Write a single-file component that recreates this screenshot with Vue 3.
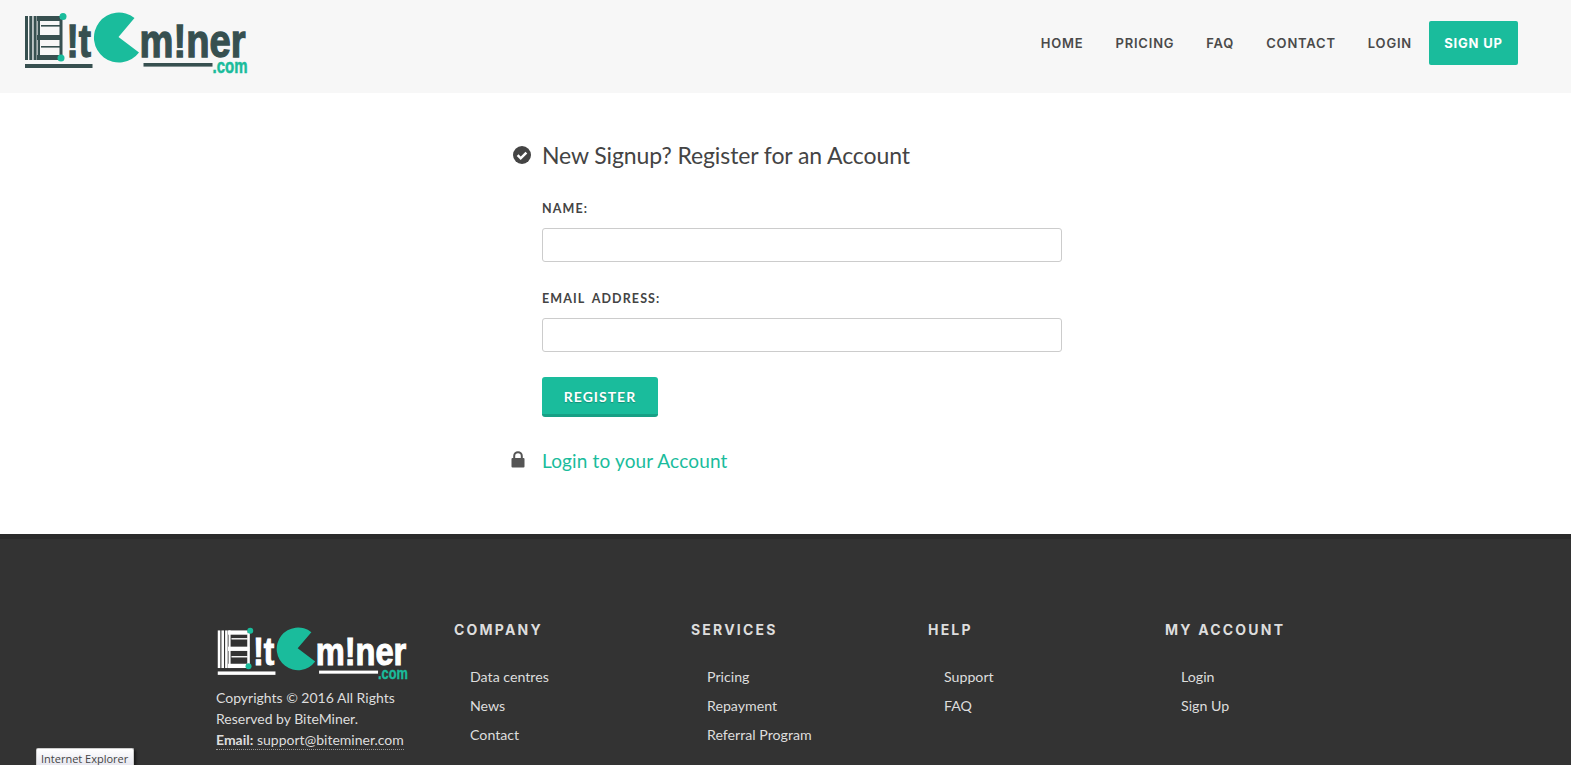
<template>
  <div class="page">
    <svg class="logo-defs" width="0" height="0" aria-hidden="true">
      <symbol id="bm-logo" viewBox="25 12 224 62">
        <g fill="currentColor">
          <rect x="25" y="16" width="3" height="44" />
          <rect x="29.3" y="16" width="3" height="44" />
          <rect x="33.6" y="16" width="3" height="44" />
          <rect x="37.6" y="16" width="2.4" height="44" />
          <rect x="37" y="16" width="23" height="5" />
          <rect x="41" y="25" width="19" height="1.6" />
          <rect x="37" y="35" width="25" height="5" />
          <rect x="41" y="46" width="19" height="1.6" />
          <rect x="37" y="55" width="23" height="5" />
          <rect x="59.5" y="19" width="3" height="37" />
          <rect x="25" y="64" width="67.5" height="4" />
          <rect x="143.5" y="63" width="69" height="3.6" />
          <text class="logo-word" x="66.5" y="57" font-size="46" textLength="24.5" lengthAdjust="spacingAndGlyphs">!t</text>
          <text class="logo-word" x="139.5" y="57" font-size="46" textLength="106" lengthAdjust="spacingAndGlyphs">m!ner</text>
        </g>
        <g fill="#1abc9c">
          <path d="M134.5 18 A25 25 0 1 0 139 52.5 L118.5 37 Z" />
          <circle cx="63" cy="16.5" r="3.5" />
          <circle cx="61" cy="58" r="3.5" />
          <text class="logo-word logo-tld" x="212.5" y="73" font-size="20" textLength="35" lengthAdjust="spacingAndGlyphs">.com</text>
        </g>
      </symbol>
    </svg>

    <header class="topbar">
      <svg class="logo logo-head"><use href="#bm-logo" /></svg>
      <nav class="nav">
        <a v-for="item in navItems" :key="item" class="nav-link">{{ item }}</a>
        <a class="nav-signup">SIGN UP</a>
      </nav>
    </header>

    <main class="content">
      <section class="signup">
        <div class="row-title">
          <svg class="icon-check" viewBox="0 0 18 18">
            <circle cx="9" cy="9" r="9" fill="#444" />
            <path d="M4.6 9.2l3.1 3.1 5.7-5.7" fill="none" stroke="#fff" stroke-width="2.5" />
          </svg>
          <h2 class="title">New Signup? Register for an Account</h2>
        </div>
        <form class="form" @submit.prevent>
          <label class="field">
            <span class="field-label">NAME:</span>
            <input class="field-input" type="text" />
          </label>
          <label class="field">
            <span class="field-label">EMAIL ADDRESS:</span>
            <input class="field-input" type="text" />
          </label>
          <button class="register" type="submit">REGISTER</button>
        </form>
        <div class="row-login">
          <svg class="icon-lock" viewBox="0 0 14 17">
            <path d="M3.2 8V5a3.8 3.8 0 0 1 7.6 0v3" fill="none" stroke="#555" stroke-width="2" />
            <rect x="0.5" y="7" width="13" height="9.5" rx="1" fill="#555" />
          </svg>
          <a class="login-link">Login to your Account</a>
        </div>
      </section>
    </main>

    <footer class="footer">
      <div class="footer-grid">
        <div class="footer-about">
          <svg class="logo logo-foot"><use href="#bm-logo" /></svg>
          <p class="about-text">Copyrights © 2016 All Rights Reserved by BiteMiner.</p>
          <p class="about-mail"><strong>Email:</strong> support@biteminer.com</p>
        </div>
        <div v-for="col in footerCols" :key="col.title" class="footer-col">
          <h4 class="col-title">{{ col.title }}</h4>
          <ul class="col-links">
            <li v-for="link in col.links" :key="link">{{ link }}</li>
          </ul>
        </div>
      </div>
    </footer>

    <div class="tooltip">Internet Explorer</div>
  </div>
</template>

<script setup>
const navItems = ['HOME', 'PRICING', 'FAQ', 'CONTACT', 'LOGIN']

const footerCols = [
  { title: 'COMPANY', links: ['Data centres', 'News', 'Contact'] },
  { title: 'SERVICES', links: ['Pricing', 'Repayment', 'Referral Program'] },
  { title: 'HELP', links: ['Support', 'FAQ'] },
  { title: 'MY ACCOUNT', links: ['Login', 'Sign Up'] }
]
</script>

<style>
html,
body {
  margin: 0;
  overflow: hidden;
}
</style>

<style scoped>
.page {
  position: relative;
  height: 765px;
  overflow: hidden;
  font-family: Lato, 'Liberation Sans', sans-serif;
  background: #fff;
}

.logo-defs {
  position: absolute;
}

.logo-word {
  font-family: 'Liberation Sans', sans-serif;
  font-weight: 700;
  stroke: currentColor;
  stroke-width: 1.3;
}

.logo-tld {
  stroke: #1abc9c;
  stroke-width: 0.5;
}

.logo {
  display: block;
}

.logo-head {
  width: 224px;
  height: 62px;
  color: #375050;
}

.logo-foot {
  width: 193px;
  height: 53px;
  margin-left: 1px;
  color: #fff;
}

.topbar {
  height: 93px;
  box-sizing: border-box;
  background: #f7f7f7;
  padding: 12px 53px 0 25px;
  display: flex;
  justify-content: space-between;
  align-items: flex-start;
}

.nav {
  display: flex;
  align-items: center;
  margin-top: 9px;
}

.nav-link {
  font-family: Inter, 'Liberation Sans', sans-serif;
  font-size: 13px;
  font-weight: 600;
  letter-spacing: 0.8px;
  color: #4a4a4a;
  margin-right: 32px;
}

.nav-signup {
  width: 89px;
  height: 44px;
  margin-left: -15px;
  line-height: 44px;
  text-align: center;
  background: #1abc9c;
  border-radius: 2px;
  color: #fff;
  font-family: Inter, 'Liberation Sans', sans-serif;
  font-size: 13px;
  font-weight: 700;
  letter-spacing: 0.8px;
}

.content {
  height: 441px;
  box-sizing: border-box;
  padding: 44px 0 0 513px;
}

.signup {
  width: 549px;
}

.row-title {
  display: flex;
  align-items: center;
  height: 36px;
}

.icon-check {
  width: 18px;
  height: 18px;
  margin-right: 11px;
}

.title {
  margin: 0;
  font-size: 23px;
  font-weight: 400;
  letter-spacing: -0.1px;
  color: #444;
}

.form {
  margin-left: 29px;
  padding-top: 27px;
}

.field {
  display: block;
  margin-bottom: 28px;
}

.field-label {
  display: block;
  font-size: 12.5px;
  font-weight: 700;
  letter-spacing: 1.1px;
  word-spacing: 3px;
  line-height: 18px;
  color: #444;
  margin-bottom: 10px;
}

.field-input {
  display: block;
  width: 100%;
  height: 34px;
  box-sizing: border-box;
  border: 1px solid #ccc;
  border-radius: 3px;
  background: #fff;
}

.register {
  display: block;
  width: 116px;
  height: 40px;
  margin-top: -3px;
  border: 0;
  border-bottom: 3px solid #17a085;
  border-radius: 3px;
  background: #1abc9c;
  color: #fff;
  font-family: inherit;
  font-size: 14px;
  font-weight: 700;
  letter-spacing: 1px;
  text-shadow: 0 1px 1px rgba(0, 0, 0, 0.25);
  padding: 2px 0 0;
}

.row-login {
  display: flex;
  align-items: center;
  margin-top: 32px;
}

.icon-lock {
  width: 14px;
  height: 17px;
  margin: -2px 17px 0 -2px;
}

.login-link {
  font-size: 19px;
  letter-spacing: 0.15px;
  color: #1abc9c;
}

.footer {
  height: 231px;
  box-sizing: border-box;
  border-top: 5px solid #2b2b2b;
  background: #333;
  padding: 88px 0 0 217px;
  color: #ddd;
  font-size: 14px;
}

.footer-grid {
  display: grid;
  grid-template-columns: repeat(5, 237px);
}

.footer-about {
  width: 195px;
  margin-left: -1px;
}

.about-text {
  margin: 7px 0 0;
  line-height: 21px;
}

.about-mail {
  margin: 1px 0 0;
  line-height: 19px;
  display: inline-block;
  border-bottom: 1px dotted #999;
}

.col-title {
  margin: -7px 0 0;
  font-family: Inter, 'Liberation Sans', sans-serif;
  font-size: 14px;
  line-height: 20px;
  font-weight: 700;
  letter-spacing: 2.2px;
  color: #ddd;
}

.col-links {
  list-style: none;
  margin: 26px 0 0;
  padding: 0 0 0 16px;
}

.col-links li {
  font-size: 14.2px;
  line-height: 21px;
  margin-bottom: 8px;
}

.tooltip {
  position: absolute;
  left: 36px;
  top: 748px;
  height: 17px;
  padding: 0 5px 0 4px;
  line-height: 19px;
  font-family: 'Open Sans', sans-serif;
  font-size: 11px;
  color: #444;
  background: linear-gradient(#fff, #e6e6ee);
  border: 1px solid #ccc;
  border-bottom: 0;
  border-radius: 2px 2px 0 0;
  box-shadow: 2px 2px 3px rgba(0, 0, 0, 0.5);
}
</style>
